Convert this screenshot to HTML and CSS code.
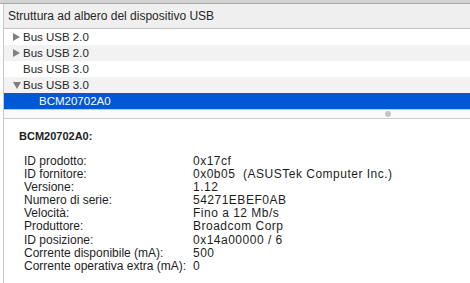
FILE: index.html
```html
<!doctype html>
<html>
<head>
<meta charset='UTF-8'>
<title>Struttura ad albero del dispositivo USB</title>
<link rel="stylesheet" href="styles.css">
</head>
<body>
<div class='topbar'></div>
<div class='window'>
<div class='tree-header'>Struttura ad albero del dispositivo USB</div>
<div class='tree'>
<div class='row'><span class='arrow closed'></span>Bus USB 2.0</div>
<div class='row'><span class='arrow closed'></span>Bus USB 2.0</div>
<div class='row'><span class='arrow'></span>Bus USB 3.0</div>
<div class='row'><span class='arrow open'></span>Bus USB 3.0</div>
<div class='row selected child'>BCM20702A0</div>
</div>
<div class='splitter'><span class='knob'></span></div>
<div class='details'>
<div class='details-title'>BCM20702A0:</div>
<div class='props'>
<div>ID prodotto:</div><div>0x17cf</div>
<div>ID fornitore:</div><div>0x0b05&nbsp; (ASUSTek Computer Inc.)</div>
<div>Versione:</div><div>1.12</div>
<div>Numero di serie:</div><div>54271EBEF0AB</div>
<div>Velocità:</div><div>Fino a 12 Mb/s</div>
<div>Produttore:</div><div>Broadcom Corp</div>
<div>ID posizione:</div><div>0x14a00000 / 6</div>
<div>Corrente disponibile (mA):</div><div>500</div>
<div>Corrente operativa extra (mA):</div><div>0</div>
</div>
</div>
</div>
</body>
</html>
```

FILE: styles.css
```css
body
{
margin: 0;
font-family: "Liberation Sans", Arial, sans-serif;
font-size: 12px;
color: #222;
background-color: white;
height: 283px;
overflow: hidden;
}

.topbar
{
height: 3px;
background-color: #d4d4d4;
border-bottom: 1px solid #a9a9a9;
}

.window
{
margin-left: 3px;
border-left: 1px solid #c9c9c9;
height: 279px;
}

.tree-header
{
height: 24px;
line-height: 24px;
padding-left: 4px;
background-color: #efefef;
border-bottom: 1px solid #c2c2c2;
color: #262626;
}

.row
{
height: 16px;
line-height: 16px;
padding-left: 9px;
display: flex;
align-items: center;
font-size: 11.5px;
color: #262626;
}
.row:nth-child(even)
{
background-color: #f2f2f2;
}
.row.selected
{
background-color: #0058d6;
color: white;
}
.row.child
{
padding-left: 35px;
}

.arrow
{
width: 10px;
height: 10px;
display: inline-block;
}
.arrow.closed
{
width: 0;
height: 0;
margin-right: 3px;
border-top: 4px solid transparent;
border-bottom: 4px solid transparent;
border-left: 7px solid #7f7f7f;
}
.arrow.open
{
width: 0;
height: 0;
margin-right: 2px;
border-left: 4px solid transparent;
border-right: 4px solid transparent;
border-top: 7px solid #7f7f7f;
}

.splitter
{
height: 8px;
background-color: #fafafa;
border-top: 1px solid #c8c8c8;
border-bottom: 1px solid #cdcdcd;
display: flex;
justify-content: flex-end;
align-items: center;
padding-right: 79px;
}
.knob
{
width: 6px;
height: 6px;
border-radius: 50%;
background-color: #c4c4c4;
}

.details
{
padding: 9px 0 0 15px;
font-size: 12px;
color: #1e1e1e;
}
.details-title
{
font-weight: bold;
font-size: 11px;
height: 16px;
line-height: 16px;
}
.props
{
display: grid;
grid-template-columns: 169px auto;
margin-top: 11px;
margin-left: 5px;
line-height: 13.1px;
}
.props div:nth-child(even)
{
letter-spacing: 0.5px;
}
```
